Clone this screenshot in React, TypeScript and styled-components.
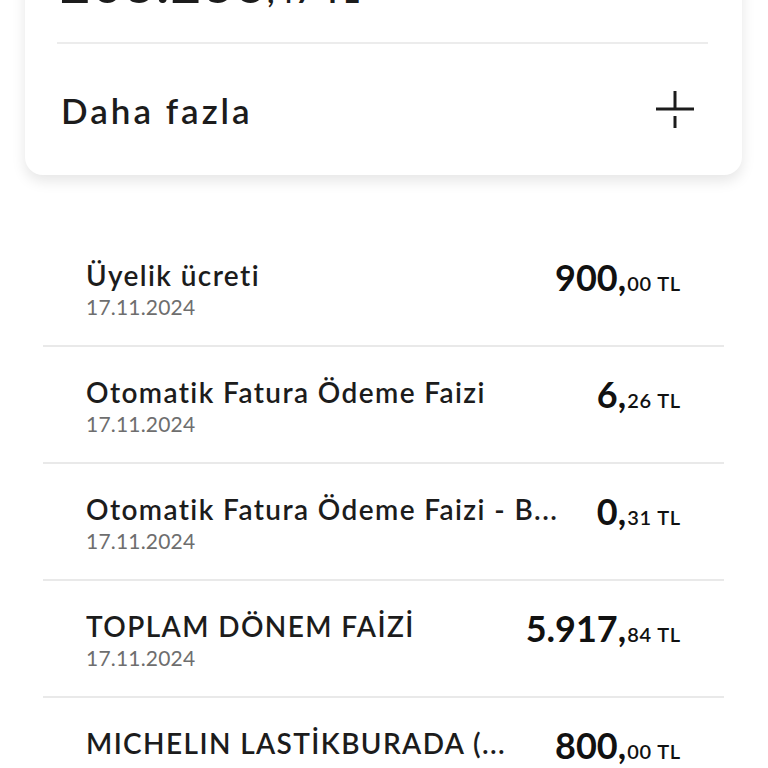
import React from 'react';
import styled, { createGlobalStyle } from 'styled-components';

type Tx = {
  title: string;
  date: string;
  whole: string;
  cents: string;
};

const transactions: Tx[] = [
  { title: 'Üyelik ücreti', date: '17.11.2024', whole: '900', cents: '00' },
  { title: 'Otomatik Fatura Ödeme Faizi', date: '17.11.2024', whole: '6', cents: '26' },
  { title: 'Otomatik Fatura Ödeme Faizi - B...', date: '17.11.2024', whole: '0', cents: '31' },
  { title: 'TOPLAM DÖNEM FAİZİ', date: '17.11.2024', whole: '5.917', cents: '84' },
  { title: 'MICHELIN LASTİKBURADA (...', date: '11.11.2024', whole: '800', cents: '00' },
];

const PlusIcon = () => (
  <svg width="40" height="40" viewBox="0 0 40 40" fill="none">
    <path d="M1 19H39" stroke="#1c1c1c" strokeWidth="3" />
    <path d="M20 1V19" stroke="#1c1c1c" strokeWidth="3" />
    <path d="M20 26V38" stroke="#1c1c1c" strokeWidth="3" />
  </svg>
);

const App: React.FC = () => {
  return (
    <Page>
      <GlobalStyle />
      <Card>
        <Balance>
          203.236<BalanceSmall>,47 TL</BalanceSmall>
        </Balance>
        <MoreRow>
          <MoreLabel>Daha fazla</MoreLabel>
          <PlusIcon />
        </MoreRow>
      </Card>
      <List>
        {transactions.map((tx, i) => (
          <Row key={i}>
            <Info>
              <Title>{tx.title}</Title>
              <DateText>{tx.date}</DateText>
            </Info>
            <Amount>
              {tx.whole},<Cents>{tx.cents} TL</Cents>
            </Amount>
          </Row>
        ))}
      </List>
    </Page>
  );
};

const GlobalStyle = createGlobalStyle`
  html, body {
    margin: 0;
    padding: 0;
    background: #ffffff;
    overflow: hidden;
  }
  body {
    font-family: 'Lato', 'Noto Sans', sans-serif;
    color: #1c1c1c;
  }
`;

const Page = styled.div`
  height: 768px;
  overflow: hidden;
  background: #ffffff;
`;

const Card = styled.div`
  margin: -49px 26px 0 25px;
  padding: 0 34px 0 32px;
  background: #ffffff;
  border-radius: 0 0 18px 18px;
  box-shadow: 0 6px 14px rgba(0, 0, 0, 0.1);
`;

const Balance = styled.div`
  font-size: 52px;
  font-weight: 700;
  line-height: 64px;
  letter-spacing: 2px;
  padding: 0 0 27px 3px;
  border-bottom: 2px solid #ececec;
`;

const BalanceSmall = styled.span`
  font-size: 30px;
  line-height: 1;
`;

const MoreRow = styled.div`
  display: flex;
  align-items: center;
  justify-content: space-between;
  height: 131px;
  padding-left: 4px;
  padding-right: 13px;
`;

const MoreLabel = styled.span`
  font-size: 35px;
  font-weight: 600;
  letter-spacing: 3px;
  color: #1c1c1c;
`;

const List = styled.div`
  margin: 55px 44px 0 43px;
`;

const Row = styled.div`
  display: flex;
  justify-content: space-between;
  align-items: flex-start;
  gap: 30px;
  height: 117px;
  box-sizing: border-box;
  padding: 27px 43px 0 43px;
  border-bottom: 2px solid #e9e9e9;
`;

const Info = styled.div`
  display: flex;
  flex-direction: column;
  min-width: 0;
`;

const Title = styled.div`
  font-size: 28px;
  font-weight: 600;
  line-height: 36px;
  letter-spacing: 1.4px;
  color: #1c1c1c;
  white-space: nowrap;
  overflow: hidden;
  text-overflow: ellipsis;
`;

const DateText = styled.div`
  font-size: 21px;
  line-height: 28px;
  color: #6e6e6e;
  letter-spacing: 0.2px;
`;

const Amount = styled.div`
  flex-shrink: 0;
  font-size: 36px;
  font-weight: 700;
  line-height: 40px;
  color: #111111;
  white-space: nowrap;
`;

const Cents = styled.span`
  font-size: 20px;
  font-weight: 600;
  line-height: 1;
  letter-spacing: 0.8px;
  margin-left: 1px;
`;

export default App;
